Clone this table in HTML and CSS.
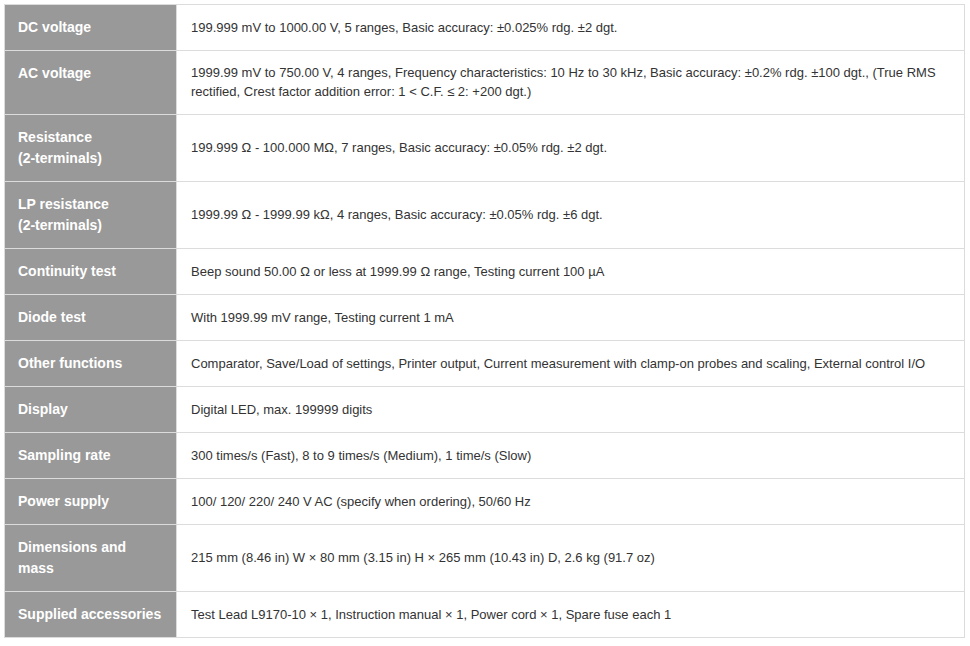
FILE: index.html
```html
<!DOCTYPE html>
<html>
<head>
<meta charset="utf-8">
<link rel="stylesheet" href="styles.css">
</head>
<body>
<table class="spec">
  <tr><th>DC voltage</th><td>199.999 mV to 1000.00 V, 5 ranges, Basic accuracy: ±0.025% rdg. ±2 dgt.</td></tr>
  <tr><th>AC voltage</th><td>1999.99 mV to 750.00 V, 4 ranges, Frequency characteristics: 10 Hz to 30 kHz, Basic accuracy: ±0.2% rdg. ±100 dgt., (True RMS rectified, Crest factor addition error: 1 &lt; C.F. ≤ 2: +200 dgt.)</td></tr>
  <tr><th>Resistance<br>(2-terminals)</th><td>199.999 Ω - 100.000 MΩ, 7 ranges, Basic accuracy: ±0.05% rdg. ±2 dgt.</td></tr>
  <tr><th>LP resistance<br>(2-terminals)</th><td>1999.99 Ω - 1999.99 kΩ, 4 ranges, Basic accuracy: ±0.05% rdg. ±6 dgt.</td></tr>
  <tr><th>Continuity test</th><td>Beep sound 50.00 Ω or less at 1999.99 Ω range, Testing current 100 µA</td></tr>
  <tr><th>Diode test</th><td>With 1999.99 mV range, Testing current 1 mA</td></tr>
  <tr><th>Other functions</th><td>Comparator, Save/Load of settings, Printer output, Current measurement with clamp-on probes and scaling, External control I/O</td></tr>
  <tr><th>Display</th><td>Digital LED, max. 199999 digits</td></tr>
  <tr><th>Sampling rate</th><td>300 times/s (Fast), 8 to 9 times/s (Medium), 1 time/s (Slow)</td></tr>
  <tr><th>Power supply</th><td>100/ 120/ 220/ 240 V AC (specify when ordering), 50/60 Hz</td></tr>
  <tr><th>Dimensions and<br>mass</th><td>215 mm (8.46 in) W × 80 mm (3.15 in) H × 265 mm (10.43 in) D, 2.6 kg (91.7 oz)</td></tr>
  <tr><th>Supplied accessories</th><td>Test Lead L9170-10 × 1, Instruction manual × 1, Power cord × 1, Spare fuse each 1</td></tr>
</table>
</body>
</html>
```
FILE: styles.css
```css
html, body {
  margin: 0;
  background: #fff;
}
body {
  padding: 4px;
  font-family: "Liberation Sans", Arial, sans-serif;
  font-size: 13px;
}
.spec {
  width: 961px;
  border-collapse: collapse;
  border: 1px solid #dcdcdc;
}
.spec th {
  width: 172px;
  box-sizing: border-box;
  background: #999999;
  color: #fff;
  font-size: 14px;
  font-weight: bold;
  text-align: left;
  vertical-align: top;
  padding: 12px 10px 12px 13px;
  line-height: 21px;
  border: 1px solid #dcdcdc;
  border-right: none;
}
.spec td {
  color: #333;
  vertical-align: middle;
  padding: 12px 14px 13px;
  line-height: 19px;
  border: 1px solid #dcdcdc;
}
```
